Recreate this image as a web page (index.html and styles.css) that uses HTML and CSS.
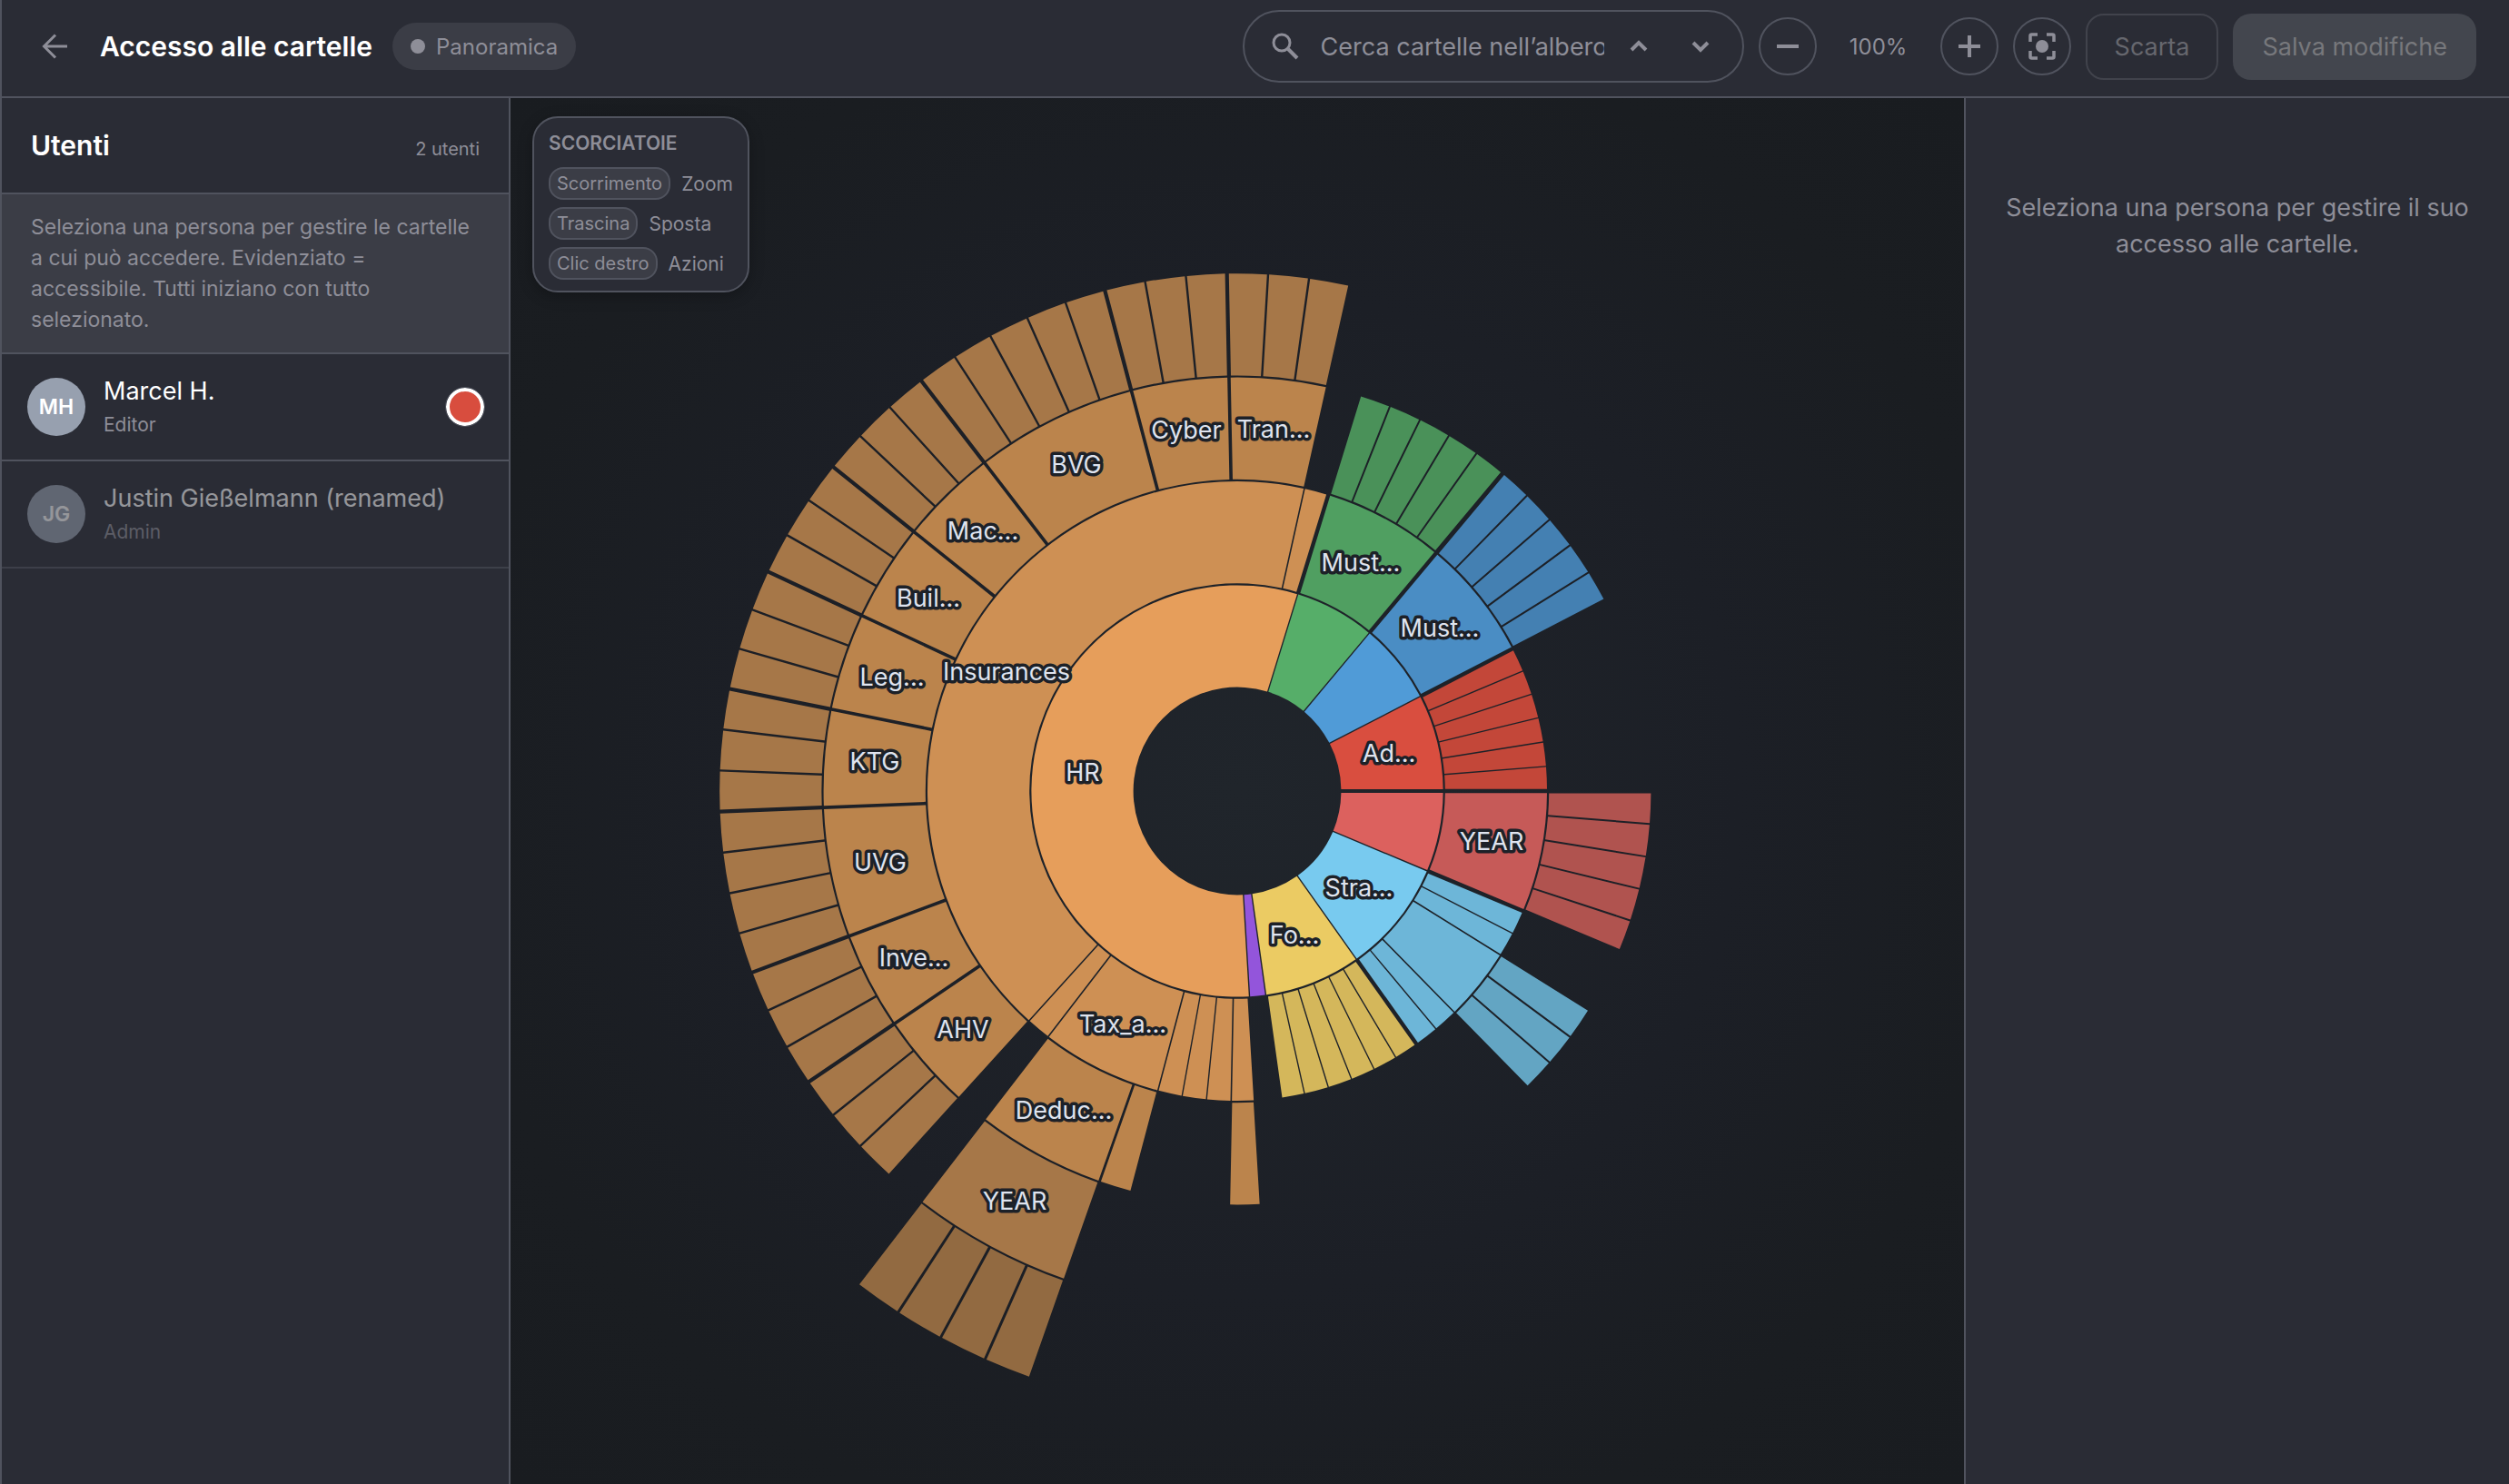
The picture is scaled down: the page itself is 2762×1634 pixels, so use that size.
FILE: index.html
```html
<!DOCTYPE html>
<html lang="it">
<head>
  <meta charset="utf-8">
  <meta name="viewport" content="width=device-width, initial-scale=1">
  <title>Accesso alle cartelle</title>
  <link rel="stylesheet" href="styles.css">
</head>
<body>
  <div class="app">
    <header class="topbar">
      <button class="back" type="button" aria-label="Indietro">
        <svg class="icon" viewBox="0 0 40 40"><path d="M34 20H9M21 7.500L8.500 20 21 32.500" stroke-width="3"/></svg>
      </button>
      <h1 class="title">Accesso alle cartelle</h1>
      <span class="pill"><span class="pill-dot"></span>Panoramica</span>

      <div class="tools">
        <div class="search">
          <svg class="icon" viewBox="0 0 40 40"><circle cx="17" cy="16" r="9" stroke-width="3"/><path d="M24 23l10 10" stroke-width="4"/></svg>
          <input class="search-input" type="text" aria-label="Cerca cartelle" placeholder="Cerca cartelle nell’albero…">
          <button class="step" type="button" aria-label="Risultato precedente">
            <svg class="icon" viewBox="0 0 40 40"><path d="M12 24l8-8 8 8" stroke-width="4"/></svg>
          </button>
          <button class="step" type="button" aria-label="Risultato successivo">
            <svg class="icon" viewBox="0 0 40 40"><path d="M12 16l8 8 8-8" stroke-width="4"/></svg>
          </button>
        </div>
        <button class="round" type="button" aria-label="Riduci">
          <svg class="icon" viewBox="0 0 40 40"><path d="M8 20h24" stroke-width="4"/></svg>
        </button>
        <output class="zoom-value">100%</output>
        <button class="round" type="button" aria-label="Ingrandisci">
          <svg class="icon" viewBox="0 0 40 40"><path d="M8 20h24M20 8v24" stroke-width="4"/></svg>
        </button>
        <button class="round" type="button" aria-label="Centra">
          <svg class="icon" viewBox="0 0 40 40"><path d="M7 15V8.500Q7 7 8.500 7H15M25 7h6.500Q33 7 33 8.500V15M33 25v6.500Q33 33 31.500 33H25M15 33H8.500Q7 33 7 31.500V25" stroke-width="3.500"/><circle class="solid" cx="20" cy="20" r="7"/></svg>
        </button>
        <button class="action action-outline" type="button" disabled>Scarta</button>
        <button class="action action-solid" type="button" disabled>Salva modifiche</button>
      </div>
    </header>

    <div class="columns">
      <aside class="users">
        <div class="users-head">
          <h2 class="title">Utenti</h2>
          <span class="count">2 utenti</span>
        </div>
        <p class="note">Seleziona una persona per gestire le cartelle a cui può accedere. Evidenziato = accessibile. Tutti iniziano con tutto selezionato.</p>
        <ul class="user-list">
          <li class="user">
            <button class="person" type="button">
              <span class="avatar">MH</span>
              <span class="who"><span class="name">Marcel H.</span><span class="role">Editor</span></span>
            </button>
            <button class="swatch" type="button" aria-label="Colore di Marcel H."></button>
          </li>
          <li class="user user-off">
            <button class="person" type="button" disabled>
              <span class="avatar">JG</span>
              <span class="who"><span class="name">Justin Gießelmann (renamed)</span><span class="role">Admin</span></span>
            </button>
          </li>
        </ul>
      </aside>

      <main class="canvas">
        <svg id="chart" class="chart" viewBox="-800 -763 1600 1526" role="img" aria-label="Albero delle cartelle"></svg>
        <section class="legend">
          <h3 class="legend-title">SCORCIATOIE</h3>
          <div class="legend-row"><kbd class="key">Scorrimento</kbd>Zoom</div>
          <div class="legend-row"><kbd class="key">Trascina</kbd>Sposta</div>
          <div class="legend-row"><kbd class="key">Clic destro</kbd>Azioni</div>
        </section>
      </main>

      <aside class="detail">
        <p class="hint">Seleziona una persona per gestire il suo accesso alle cartelle.</p>
      </aside>
    </div>
  </div>
  <script src="chart.js"></script>
</body>
</html>
```
FILE: styles.css
```css
:root {
  --panel: #2a2c35;
  --raised: #3b3d46;
  --line: #50535e;
  --muted: #8e8e98;
  --ink: #1d2128;
}

* {
  box-sizing: border-box;
}

body {
  margin: 0;
  background: var(--panel);
  color: var(--muted);
  font-family: Inter, "Liberation Sans", sans-serif;
  font-size: 27px;
}

h1, h2, h3, p, ul {
  margin: 0;
  padding: 0;
}

button, input {
  margin: 0;
  padding: 0;
  border: 0;
  background: none;
  color: inherit;
  font: inherit;
}

.app {
  display: flex;
  flex-direction: column;
  min-height: 100vh;
  border-left: 2px solid var(--line);
}

.icon {
  display: block;
  flex: none;
  width: 40px;
  height: 40px;
  fill: none;
  stroke: var(--muted);
}

.solid {
  fill: var(--muted);
  stroke: none;
}

/* Top bar */

.topbar {
  display: flex;
  align-items: center;
  padding: 11px 36px 15px 38px;
  border-bottom: 2px solid var(--line);
}

.title {
  color: #fff;
  font-size: 30px;
  font-weight: 600;
  line-height: 40px;
}

.back {
  margin-right: 30px;
}

.pill {
  display: flex;
  align-items: center;
  gap: 12px;
  height: 52px;
  margin-left: 22px;
  padding: 0 20px;
  border-radius: 26px;
  background: var(--raised);
  font-size: 24px;
}

.pill-dot {
  width: 16px;
  height: 16px;
  border-radius: 50%;
  background: var(--muted);
}

.tools {
  display: flex;
  align-items: center;
  gap: 16px;
  margin-left: auto;
}

.search {
  display: flex;
  align-items: center;
  gap: 8px;
  width: 552px;
  height: 80px;
  padding: 0 16px 0 24px;
  border: 2px solid var(--line);
  border-radius: 40px;
}

.search-input {
  flex: 1;
  min-width: 0;
  margin-left: 12px;
  outline: 0;
}

.search-input::placeholder {
  color: var(--muted);
  opacity: 1;
}

.step {
  display: grid;
  place-items: center;
  width: 60px;
  height: 60px;
}

.round {
  display: grid;
  place-items: center;
  width: 64px;
  height: 64px;
  border: 2px solid var(--line);
  border-radius: 50%;
}

.zoom-value {
  width: 104px;
  font-size: 24px;
  text-align: center;
}

.action {
  height: 73px;
  padding: 0 30px;
  border: 2px solid transparent;
  border-radius: 20px;
}

.action-outline {
  border-color: #41434c;
  color: #66676e;
}

.action-solid {
  background: #43464e;
  color: #77787c;
}

/* Columns */

.columns {
  display: grid;
  flex: 1;
  grid-template-columns: 560px 1fr 600px;
}

.users {
  border-right: 2px solid var(--line);
}

.users-head {
  display: flex;
  align-items: baseline;
  justify-content: space-between;
  padding: 32px;
  border-bottom: 2px solid var(--line);
}

.count {
  font-size: 20px;
}

.note {
  padding: 19px 24px 19px 32px;
  border-bottom: 2px solid var(--line);
  background: var(--raised);
  font-size: 23px;
  line-height: 34px;
}

.user-list {
  list-style: none;
}

.user {
  display: flex;
  align-items: center;
  justify-content: space-between;
  height: 118px;
  padding: 0 27px 0 28px;
  border-bottom: 2px solid var(--line);
}

.user-off {
  opacity: 0.5;
}

.person {
  display: flex;
  align-items: center;
  gap: 20px;
  text-align: left;
}

.avatar {
  display: grid;
  place-items: center;
  width: 64px;
  height: 64px;
  border-radius: 50%;
  background: #97a0af;
  color: #fff;
  font-size: 23px;
  font-weight: 600;
}

.who {
  display: grid;
  padding-top: 2px;
}

.name {
  color: #fff;
  line-height: 38px;
}

.role {
  font-size: 21px;
  line-height: 36px;
}

.swatch {
  width: 42px;
  height: 42px;
  border: 4px solid #fff;
  border-radius: 50%;
  outline: 1px solid var(--line);
  background: #d84d3e;
}

/* Chart area */

.canvas {
  position: relative;
  background: radial-gradient(circle, #20252b 0%, #1c1f26 50%, #1a1d21 78%, #191c20 100%);
}

.chart {
  display: block;
  width: 100%;
  height: 100%;
}

.label {
  fill: #dfe3ee;
  stroke: var(--ink);
  stroke-width: 7px;
  stroke-linejoin: round;
  paint-order: stroke;
  font-size: 27px;
  text-anchor: middle;
}

.legend {
  position: absolute;
  top: 20px;
  left: 24px;
  display: grid;
  gap: 8px;
  padding: 16px 16px 12px;
  border: 2px solid var(--line);
  border-radius: 28px;
  background: var(--panel);
  box-shadow: 0 4px 16px rgba(0, 0, 0, 0.25);
}

.legend-title {
  margin-bottom: 6px;
  font-size: 21px;
  font-weight: 600;
  line-height: 24px;
}

.legend-row {
  display: flex;
  align-items: center;
  gap: 12px;
  font-size: 21px;
}

.key {
  height: 36px;
  padding: 0 7px;
  border: 2px solid var(--line);
  border-radius: 16px;
  background: var(--raised);
  font-family: inherit;
  font-size: 20px;
  line-height: 32px;
}

.detail {
  padding: 101px 40px;
  border-left: 2px solid var(--line);
}

.hint {
  line-height: 40px;
  text-align: center;
}
```
FILE: chart.js
```js
// Folder tree drawn as a sunburst. Every leaf gets the same share of the circle.
const STEP = 114.4;      // thickness of one ring
const RING_GAP = 2.2;    // space left outside each ring

const leaves = n => Array.from({ length: n }, () => ({}));
const folder = (label, n) => ({ label, children: leaves(n) });

const tree = [
  { colors: ["#dc615e", "#c65a58", "#b0534f"], children: [folder("YEAR", 5)] },
  { label: "Stra...", colors: ["#78caef", "#6db6d8", "#63a5c3"],
    children: [...leaves(2), { children: leaves(3) }, ...leaves(2)] },
  { label: "Fo...", colors: ["#ebcb63", "#d4b75b"], children: leaves(6) },
  { colors: ["#9355db"] },
  { label: "HR", colors: ["#e69e5b", "#ce9054", "#bb844c", "#a67748", "#926a41"],
    children: [
      { children: leaves(1) },
      ...leaves(3),
      { label: "Tax_a...", children: [
        {},
        { label: "Deduc...", children: [folder("YEAR", 4)] }
      ] },
      {},
      { label: "Insurances", children: [
        folder("AHV", 3), folder("Inve...", 3), folder("UVG", 4),
        folder("KTG", 3), folder("Leg...", 3), folder("Buil...", 3),
        folder("Mac...", 3), folder("BVG", 5), folder("Cyber", 3),
        folder("Tran...", 3)
      ] },
      {}
    ] },
  { colors: ["#56ae69", "#509f61", "#4a9159"], children: [folder("Must...", 5)] },
  { colors: ["#509bd7", "#4a8dc4", "#4480b2"], children: [folder("Must...", 5)] },
  { label: "Ad...", colors: ["#d94e3f", "#c34739"], children: leaves(6) }
];

const count = node =>
  node.children ? node.children.reduce((sum, c) => sum + count(c), 0) : 1;

const total = tree.reduce((sum, n) => sum + count(n), 0);
const unit = (2 * Math.PI) / total;

// Half of the gap towards a sibling, by ring.
const LEAF_PAD = [0, 0.7, 0.7, 1, 1.2, 1.5];
const FOLDER_PAD = [0, 0.7, 0.9, 1.8, 1.8, 1.8];
const ownPad = (node, depth) => (node.children ? FOLDER_PAD : LEAF_PAD)[depth];
const inherit = (pad, depth) => (depth === 1 ? 2.2 : pad + 0.3);

const point = (r, angle) =>
  `${(r * Math.cos(angle)).toFixed(2)} ${(r * Math.sin(angle)).toFixed(2)}`;

function wedge(depth, a0, a1, pad0, pad1) {
  const r0 = depth * STEP;
  const r1 = r0 + STEP - RING_GAP;
  const large = a1 - a0 > Math.PI ? 1 : 0;
  const s0 = Math.asin(pad0 / r0), s1 = Math.asin(pad1 / r0);
  const t0 = Math.asin(pad0 / r1), t1 = Math.asin(pad1 / r1);
  return `M${point(r0, a0 + s0)}A${r0} ${r0} 0 ${large} 1 ${point(r0, a1 - s1)}` +
    `L${point(r1, a1 - t1)}A${r1} ${r1} 0 ${large} 0 ${point(r1, a0 + t0)}Z`;
}

const shapes = [];
const labels = [];

function draw(nodes, depth, start, startPad, endPad, colors) {
  let a0 = start;
  nodes.forEach((node, i) => {
    const a1 = a0 + count(node) * unit;
    const fill = node.colors || colors;
    const pad0 = i === 0 ? startPad : ownPad(node, depth);
    const pad1 = i === nodes.length - 1 ? endPad : ownPad(node, depth);
    shapes.push(`<path fill="${fill[depth - 1]}" d="${wedge(depth, a0, a1, pad0, pad1)}"/>`);
    if (node.label) {
      const mid = (a0 + a1) / 2;
      const r = (depth + 0.5) * STEP;
      const x = Math.round(r * Math.cos(mid));
      const y = Math.round(r * Math.sin(mid)) + 9;
      labels.push(`<text class="label" x="${x}" y="${y}">${node.label}</text>`);
    }
    if (node.children) {
      draw(node.children, depth + 1, a0, inherit(pad0, depth), inherit(pad1, depth), fill);
    }
    a0 = a1;
  });
}

draw(tree, 1, 0, 2, 2);
document.getElementById("chart").innerHTML = shapes.join("") + labels.join("");
```
